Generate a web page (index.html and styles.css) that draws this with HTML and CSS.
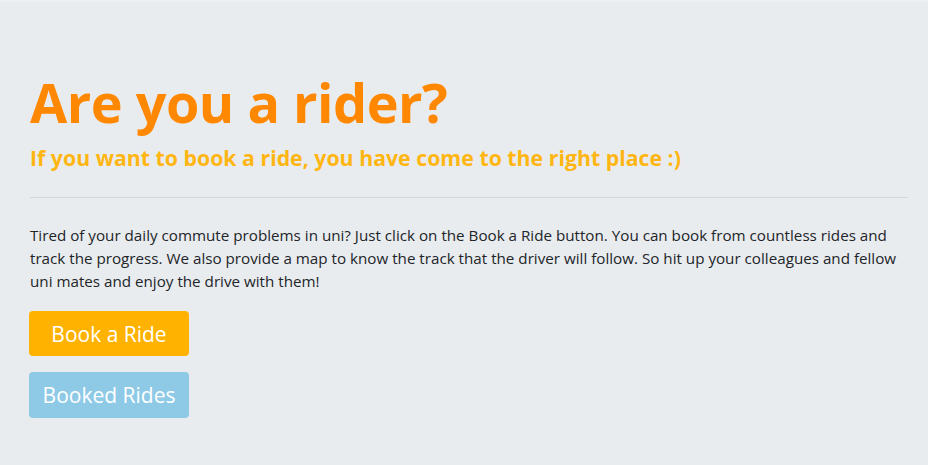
FILE: index.html
```html
<!DOCTYPE html>
<html lang="en">
<head>
<meta charset="utf-8">
<title>Are you a rider?</title>
<link rel="stylesheet" href="styles.css">
</head>
<body>
<main class="jumbotron">
  <h1 class="title">Are you a rider?</h1>
  <h2 class="lead">If you want to book a ride, you have come to the right place :)</h2>
  <hr class="rule">
  <p class="text">Tired of your daily commute problems in uni? Just click on the Book a Ride button. You can book from countless rides and track the progress. We also provide a map to know the track that the driver will follow. So hit up your colleagues and fellow uni mates and enjoy the drive with them!</p>
  <div class="actions">
    <a class="btn btn-book" href="#">Book a Ride</a>
    <a class="btn btn-booked" href="#">Booked Rides</a>
  </div>
</main>
</body>
</html>
```
FILE: styles.css
```css
html, body {
  margin: 0;
  padding: 0;
  background: #e9ecef;
}
body {
  font-family: "Open Sans", "Noto Sans", sans-serif;
  color: #212529;
  height: 465px;
  overflow: hidden;
}
.jumbotron {
  background: #e9ecef;
  border-top: 2px solid #eef0f2;
  padding: 68px 18px 0 30px;
  display: flex;
  flex-direction: column;
}
.title {
  margin: 0;
  font-size: 54px;
  font-weight: 700;
  line-height: 1.2;
  color: #ff8800;
  letter-spacing: -0.5px;
}
.lead {
  margin: 10px 0 0;
  font-size: 21.3px;
  font-weight: 700;
  line-height: 1.2;
  color: #ffb612;
}
.rule {
  margin: 27px 0 0;
  border: 0;
  border-top: 1px solid #d3d6d9;
  width: 878px;
}
.text {
  margin: 26px 0 0;
  font-size: 15.2px;
  line-height: 23px;
  max-width: 880px;
}
.actions {
  display: flex;
  flex-direction: column;
  gap: 16px;
  margin: 18px 0 0 -1px;
}
.btn {
  display: flex;
  align-items: center;
  justify-content: center;
  width: 160px;
  height: 45px;
  border-radius: 4px;
  color: #fff;
  font-size: 21px;
  text-decoration: none;
}
.btn-book { background: #ffb300; }
.btn-booked { background: #8ecae6; height: 46px; }
```
